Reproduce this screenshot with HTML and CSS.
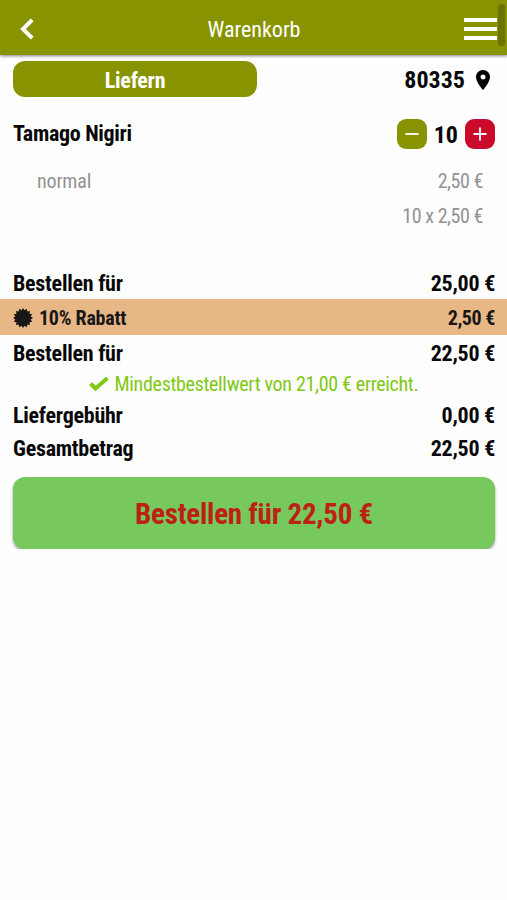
FILE: index.html
```html
<!DOCTYPE html>
<html lang="de">
<head>
    <meta charset="UTF-8">
    <meta name="viewport" content="width=device-width, initial-scale=1.0">
    <title>Warenkorb</title>
    <link rel="stylesheet" href="styles.css">
</head>
<body>
    <header class="header">
        <svg class="back" width="14" height="22" viewBox="0 0 14 22"><path d="M12.2 1.8L3 11l9.2 9.2" /></svg>
        <h1 class="title">Warenkorb</h1>
        <div class="menu"><span></span><span></span><span></span></div>
        <div class="scrollbar"></div>
    </header>

    <main>
        <div class="delivery">
            <button class="delivery-type">Liefern</button>
            <div class="zip">
                <span>80335</span>
                <svg width="14" height="20" viewBox="0 0 14 20"><path fill-rule="evenodd" d="M7 0C3.1 0 0 3.1 0 7c0 5.2 7 13 7 13s7-7.800 7-13c0-3.900-3.100-7-7-7zm0 4.500a2.500 2.500 0 1 1 0 5 2.500 2.500 0 0 1 0-5z" /></svg>
            </div>
        </div>

        <div class="item">
            <span class="item-name">Tamago Nigiri</span>
            <div class="amount">
                <button class="minus"><svg width="14" height="14" viewBox="0 0 14 14"><path d="M.5 7h13" /></svg></button>
                <span>10</span>
                <button class="plus"><svg width="14" height="14" viewBox="0 0 14 14"><path d="M.5 7h13M7 .5v13" /></svg></button>
            </div>
        </div>
        <div class="option"><span>normal</span><span class="price">2,50 €</span></div>
        <div class="option"><span></span><span class="price">10 x 2,50 €</span></div>

        <div class="totals">
            <div class="row sum"><span>Bestellen für</span><span>25,00 €</span></div>
            <div class="row discount">
                <span class="discount-label">
                    <svg width="20" height="20" viewBox="-10 -10 20 20"><path d="M10 0L7.650 1.520 9.240 3.830 6.480 4.340 7.070 7.070 4.340 6.480 3.830 9.240 1.520 7.650 0 10-1.520 7.650-3.830 9.240-4.340 6.480-7.070 7.070-6.480 4.340-9.240 3.830-7.650 1.520-10 0-7.650-1.520-9.240-3.830-6.480-4.340-7.070-7.070-4.340-6.480-3.830-9.240-1.520-7.650 0-10 1.520-7.650 3.830-9.240 4.340-6.480 7.070-7.070 6.480-4.340 9.240-3.830 7.650-1.520z" /></svg>
                    10% Rabatt
                </span>
                <span class="price">2,50 €</span>
            </div>
            <div class="row subtotal"><span>Bestellen für</span><span>22,50 €</span></div>
            <div class="minimum">
                <svg width="20" height="15" viewBox="0 0 20 15"><path d="M1.500 6.500l5 5L18.500 1" /></svg>
                <span>Mindestbestellwert von 21,00 € erreicht.</span>
            </div>
            <div class="row"><span>Liefergebühr</span><span>0,00 €</span></div>
            <div class="row"><span>Gesamtbetrag</span><span>22,50 €</span></div>
        </div>

        <button class="order">Bestellen für 22,50 €</button>
    </main>
</body>
</html>
```

FILE: styles.css
```css
* {
    box-sizing: border-box;
}
body {
    margin: 0;
    background: #fefefe;
    color: #080808;
    font-family: "Roboto Condensed", Roboto, sans-serif;
    font-stretch: condensed;
    font-size: 22px;
}
button {
    border: none;
    padding: 0;
    font: inherit;
    cursor: pointer;
}
.header {
    position: relative;
    display: flex;
    align-items: center;
    justify-content: space-between;
    height: 55px;
    padding: 2px 10px 0 20px;
    background: #879300;
    box-shadow: 0 1px 3px rgba(0, 0, 0, 0.5);
}
.back {
    fill: none;
    stroke: #fff;
    stroke-width: 4;
}
.title {
    flex: 1;
    margin: 0;
    padding-left: 10px;
    padding-top: 2px;
    color: #fff;
    font-size: 22px;
    font-weight: 400;
    text-align: center;
}
.menu {
    display: flex;
    flex-direction: column;
    gap: 5px;
    width: 33px;
}
.menu span {
    height: 4px;
    background: #fff;
}
.scrollbar {
    position: absolute;
    top: 4px;
    right: 2px;
    width: 7px;
    height: 42px;
    border-radius: 3px;
    background: #6b7400;
}
.delivery {
    display: flex;
    justify-content: space-between;
    align-items: flex-start;
    height: 43px;
    padding: 6px 17px 0 13px;
}
.delivery-type {
    width: 244px;
    height: 36px;
    padding-top: 3px;
    border-radius: 12px;
    background: #879300;
    color: #fff;
    font-weight: 700;
    letter-spacing: -0.25px;
}
.zip {
    display: flex;
    align-items: center;
    gap: 11px;
    height: 37px;
    font-size: 24px;
    font-weight: 700;
}
.item {
    display: flex;
    justify-content: space-between;
    align-items: center;
    height: 72px;
    padding: 0 12px 0 13px;
    font-weight: 700;
}
.item-name {
    padding-bottom: 1px;
    letter-spacing: -0.3px;
}
.amount {
    display: flex;
    align-items: center;
    gap: 7px;
    font-size: 24px;
}
.amount span {
    padding-top: 2px;
}
.amount button {
    display: flex;
    align-items: center;
    justify-content: center;
    width: 30px;
    height: 30px;
    border-radius: 9px;
}
.amount svg {
    stroke: #fff;
    stroke-width: 1.8;
}
.minus { background: #879300; }
.plus { background: #c90a2b; }
.option {
    display: flex;
    justify-content: space-between;
    height: 35px;
    padding: 0 24px 0 37px;
    color: #929292;
    font-size: 20px;
    line-height: 22px;
    letter-spacing: -0.15px;
}
.price {
    letter-spacing: -0.45px;
}
.totals {
    padding-top: 28px;
}
.row {
    display: flex;
    justify-content: space-between;
    align-items: center;
    height: 33px;
    padding: 0 12px 0 13px;
    font-weight: 700;
    letter-spacing: -0.25px;
}
.sum {
    height: 31px;
}
.discount {
    height: 36px;
    padding-top: 2px;
    background: #e8b786;
    color: #171717;
    font-size: 20px;
}
.discount-label {
    display: flex;
    align-items: center;
    gap: 6px;
}
.discount svg {
    fill: #171717;
}
.subtotal {
    height: 36px;
}
.minimum {
    display: flex;
    align-items: center;
    justify-content: center;
    gap: 6px;
    height: 28px;
    padding-bottom: 2px;
    color: #80c814;
    font-size: 20px;
    letter-spacing: -0.32px;
}
.minimum svg {
    fill: none;
    stroke: #80c814;
    stroke-width: 4;
}
.order {
    display: block;
    width: 482px;
    height: 72px;
    margin: 12px 0 0 13px;
    padding-top: 2px;
    border-radius: 12px;
    background: #77c95e;
    box-shadow: 0 2px 3px rgba(0, 0, 0, 0.4);
    color: #bd2115;
    font-size: 29px;
    font-weight: 700;
    letter-spacing: -0.22px;
}
```
